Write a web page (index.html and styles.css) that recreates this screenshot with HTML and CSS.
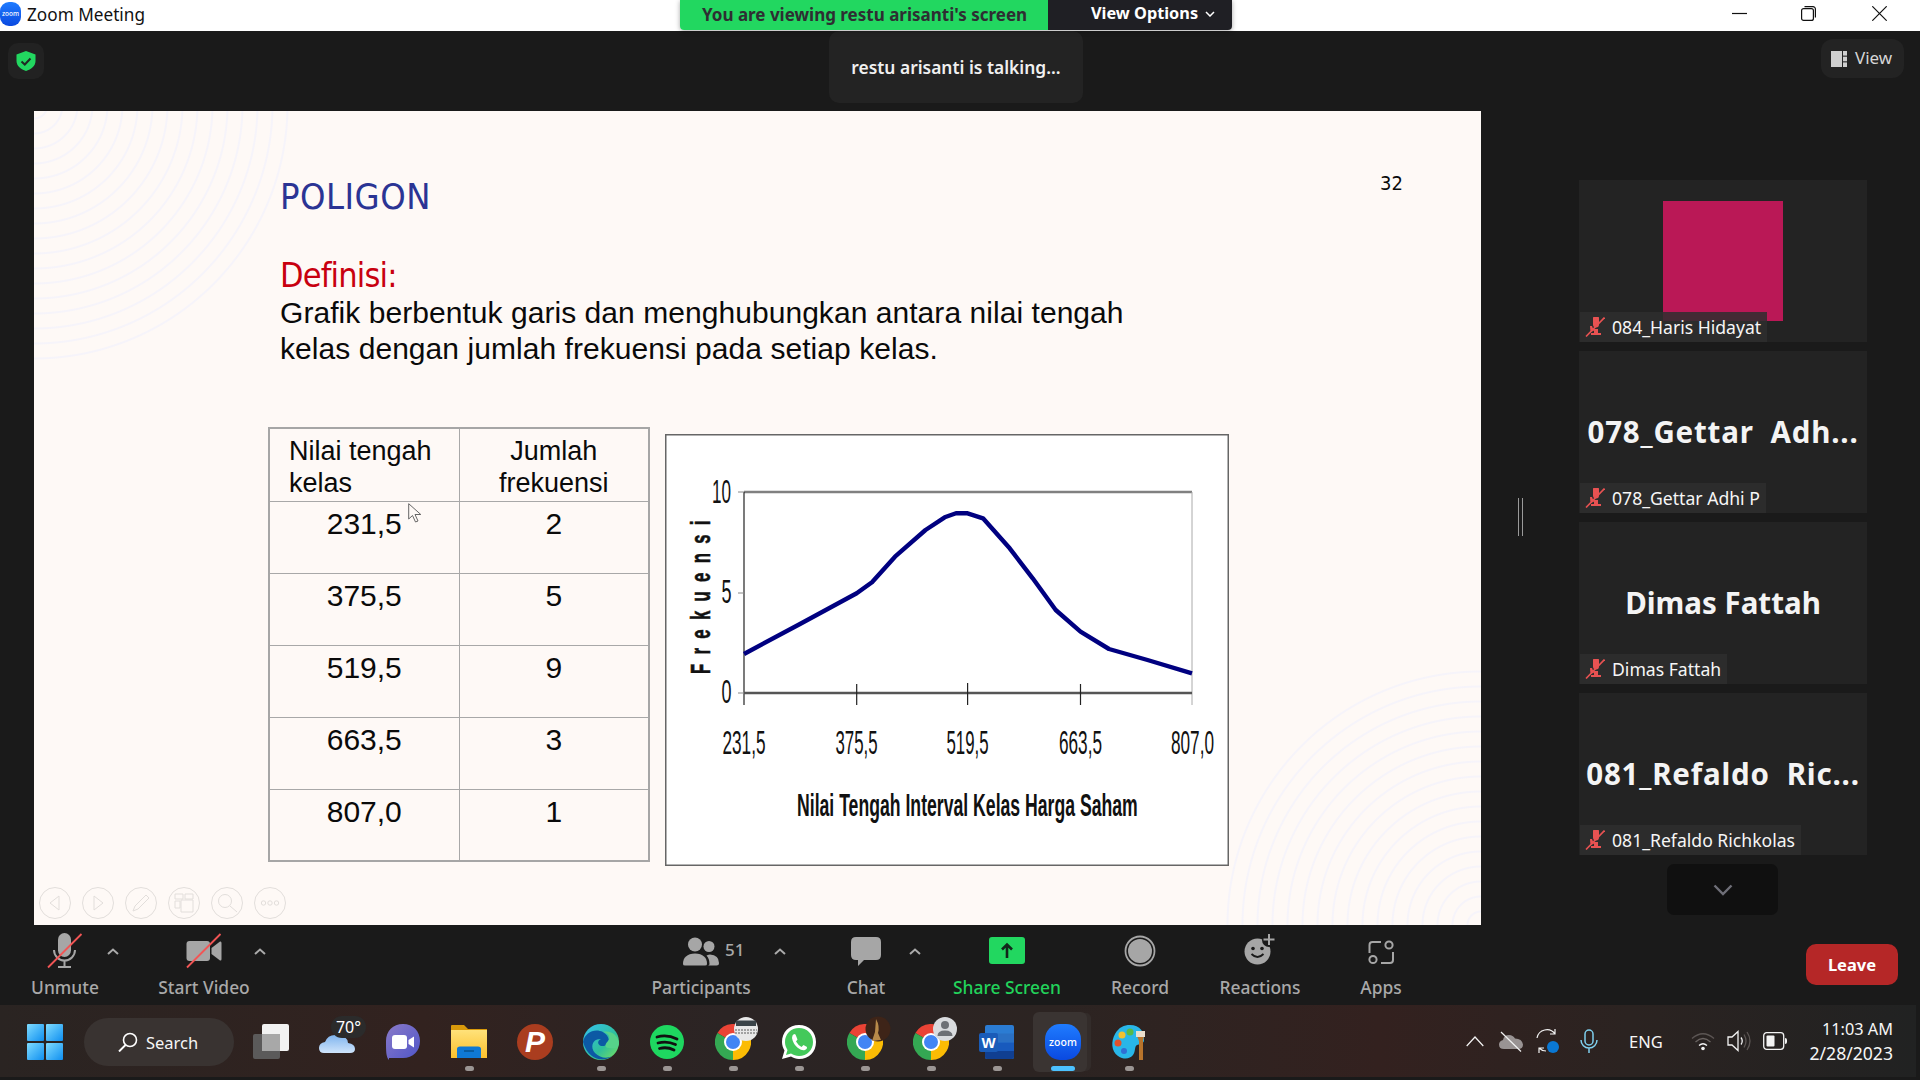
FILE: index.html
```html
<!DOCTYPE html>
<html lang="en">
<head>
<meta charset="utf-8">
<title>Zoom Meeting</title>
<link rel="stylesheet" href="styles.css">
</head>
<body>
<svg class="defs" aria-hidden="true">
  <defs>
    <linearGradient id="gWin" x1="0" y1="0" x2="1" y2="1"><stop offset="0" stop-color="#7fdcff"/><stop offset="1" stop-color="#0f8ff0"/></linearGradient>
    <linearGradient id="gBlue" x1="0" y1="0" x2="0" y2="1"><stop offset="0" stop-color="#1f7cff"/><stop offset="1" stop-color="#0a49e0"/></linearGradient>
    <linearGradient id="gEdge" x1="0" y1="0" x2="1" y2="1"><stop offset="0" stop-color="#35c1f1"/><stop offset=".6" stop-color="#2fbf9a"/><stop offset="1" stop-color="#7fe35a"/></linearGradient>
    <linearGradient id="gFolder" x1="0" y1="0" x2="0" y2="1"><stop offset="0" stop-color="#ffe27a"/><stop offset="1" stop-color="#fcc02c"/></linearGradient>
    <linearGradient id="gTeams" x1="0" y1="0" x2="1" y2="1"><stop offset="0" stop-color="#8a7ac8"/><stop offset="1" stop-color="#4f55c9"/></linearGradient>
    <linearGradient id="gCloud" x1="0" y1="0" x2="0" y2="1"><stop offset="0" stop-color="#7fb4ee"/><stop offset="1" stop-color="#cfe4fb"/></linearGradient>
    <symbol id="muteName" viewBox="0 0 20 20">
      <path d="M8 1.500a3 3 0 0 1 6 0v6a3 3 0 0 1-6 0zM6 16h10v2H6zM9 12h4v5H9zM5 9l2 0q.5 3 3 4l-4 2q-1-2-1-6z" fill="#e85252"/>
      <path d="M1 19.500 19.500 .5" stroke="#e85252" stroke-width="1.600" fill="none"/>
    </symbol>
    <symbol id="chrome" viewBox="0 0 36 36">
      <path d="M18 18 2.400 9A18 18 0 0 1 33.600 9Z" fill="#ea4335"/>
      <path d="M18 18 33.600 9A18 18 0 0 1 18 36Z" fill="#fbbc04"/>
      <path d="M18 18 18 36A18 18 0 0 1 2.400 9Z" fill="#34a853"/>
      <circle cx="18" cy="18" r="9" fill="#fff"/>
      <circle cx="18" cy="18" r="7" fill="#4285f4"/>
    </symbol>
  </defs>
</svg>

<header class="titlebar">
  <svg class="app-logo" viewBox="0 0 21 24"><rect width="21" height="24" rx="9" fill="url(#gBlue)"/><text class="logo-text" x="10.500" y="14" font-size="6.400">zoom</text></svg>
  <span class="app-title">Zoom Meeting</span>
  <div class="banner">
    <span class="banner-msg">You are viewing restu arisanti's screen</span>
    <span class="banner-opts">View Options
      <svg class="banner-chev" viewBox="0 0 10 6"><path d="M1 1 5 5 9 1" fill="none" stroke="#fff" stroke-width="1.500"/></svg>
    </span>
  </div>
  <div class="win-controls">
    <svg class="win-icon" viewBox="0 0 15 15"><path d="M0 7.500H15" stroke="#111" stroke-width="1.200"/></svg>
    <svg class="win-icon win-restore" viewBox="0 0 15 15"><rect x=".6" y="2.600" width="11.800" height="11.800" rx="2" fill="none" stroke="#111" stroke-width="1.200"/><path d="M3.500 .6H12a2.400 2.400 0 0 1 2.400 2.400V11.500" fill="none" stroke="#111" stroke-width="1.200"/></svg>
    <svg class="win-icon win-close" viewBox="0 0 15 15"><path d="M.3 .3 14.700 14.700M14.700 .3 .3 14.700" stroke="#111" stroke-width="1.200"/></svg>
  </div>
</header>

<main class="stage">
  <div class="shield-box">
    <svg class="shield" viewBox="0 0 20 20"><path d="M10 0 19.500 3.500V10C19.500 15 15 18.500 10 20 5 18.500 .5 15 .5 10V3.500Z" fill="#22d760"/><path d="M5.500 10.500 8.800 13.500 14.500 7.500" fill="none" stroke="#1f2a24" stroke-width="2"/></svg>
  </div>
  <div class="talking">restu arisanti is talking...</div>
  <div class="view-btn">
    <svg class="view-icon" viewBox="0 0 16 16"><rect width="11" height="16" fill="#cfcfcf"/><rect x="12" width="4" height="4.600" fill="#cfcfcf"/><rect x="12" y="5.700" width="4" height="4.600" fill="#cfcfcf"/><rect x="12" y="11.400" width="4" height="4.600" fill="#cfcfcf"/></svg>
    View
  </div>

  <section class="slide">
    <div class="rings rings-tl"></div>
    <div class="rings rings-br"></div>
    <div class="slide-content">
      <div class="slide-head">
        <h1 class="slide-title">POLIGON</h1>
        <span class="slide-num">32</span>
      </div>
      <h2 class="slide-def">Definisi:</h2>
      <p class="slide-body">Grafik berbentuk garis dan menghubungkan antara nilai tengah<br>kelas dengan jumlah frekuensi pada setiap kelas.</p>
      <div class="slide-row">
        <table class="freq">
          <tr class="freq-head"><th class="th-left">Nilai tengah<br>kelas</th><th>Jumlah<br>frekuensi</th></tr>
          <tr><td>231,5</td><td>2</td></tr>
          <tr><td>375,5</td><td>5</td></tr>
          <tr><td>519,5</td><td>9</td></tr>
          <tr><td>663,5</td><td>3</td></tr>
          <tr><td>807,0</td><td>1</td></tr>
        </table>
        <svg class="chart" viewBox="0 0 564 432">
          <rect x=".75" y=".75" width="562.500" height="430.500" fill="#fff" stroke="#666" stroke-width="1.500"/>
          <path d="M79 58H527" stroke="#808080" stroke-width="2.500"/>
          <path d="M527 58V271" stroke="#aaa" stroke-width="1"/>
          <path d="M79 58V271" stroke="#222" stroke-width="1.200"/>
          <path d="M79 259H527" stroke="#555" stroke-width="2.500"/>
          <path d="M73 58H79M73 159H79M73 259H79" stroke="#888" stroke-width="1"/>
          <path d="M191.700 250V271M302.600 249V271M415.500 250V271" stroke="#222" stroke-width="1.200"/>
          <polyline points="79,220 135,190 191.700,159.300 207,148.300 230,122.700 260.500,96 279.700,83.300 291,79.300 302.600,79.300 318,84.300 344.700,114.300 367.700,144.300 390.700,176 415.500,197.700 444,215 482.500,226 527,239.300" fill="none" stroke="#000080" stroke-width="4.400" stroke-linejoin="round"/>
          <text class="ch-num" transform="translate(47,69) scale(.518,1)">10</text>
          <text class="ch-num" transform="translate(56.500,169) scale(.545,1)">5</text>
          <text class="ch-num" transform="translate(56.500,269) scale(.545,1)">0</text>
          <text class="ch-num" transform="translate(57.500,320) scale(.521,1)">231,5</text>
          <text class="ch-num" transform="translate(170.500,320) scale(.51,1)">375,5</text>
          <text class="ch-num" transform="translate(281.500,320) scale(.51,1)">519,5</text>
          <text class="ch-num" transform="translate(394,320) scale(.521,1)">663,5</text>
          <text class="ch-num" transform="translate(506,320) scale(.521,1)">807,0</text>
          <text class="ch-title" transform="translate(132,382) scale(.569,1)">Nilai Tengah Interval Kelas Harga Saham</text>
          <text class="ch-ylabel" transform="translate(45,240) rotate(-90) scale(.62,1)" letter-spacing="15">Frekuensi</text>
        </svg>
      </div>
    </div>
    <svg class="cursor" viewBox="0 0 14 20"><path d="M.7 .7V16L4.500 12.500 7.500 19 10 18 7 11.500H12.800Z" fill="#fef9f6" stroke="#666" stroke-width="1"/></svg>
    <div class="slide-tools">
      <svg class="tool" viewBox="0 0 32 32"><circle cx="16" cy="16" r="15.500"/><path d="M20 9 11 16 20 23Z"/></svg>
      <svg class="tool" viewBox="0 0 32 32"><circle cx="16" cy="16" r="15.500"/><path d="M12 9 21 16 12 23Z"/></svg>
      <svg class="tool" viewBox="0 0 32 32"><circle cx="16" cy="16" r="15.500"/><path d="M8 24 10 19 21 8 24 11 13 22Z"/></svg>
      <svg class="tool" viewBox="0 0 32 32"><circle cx="16" cy="16" r="15.500"/><path d="M7 7H15V12H7ZM17 7H25V12H17ZM7 14H12V21H7ZM13 13H25V25H13Z"/></svg>
      <svg class="tool" viewBox="0 0 32 32"><circle cx="16" cy="16" r="15.500"/><circle cx="14" cy="14" r="6.500"/><path d="M19 19 26 25"/></svg>
      <svg class="tool" viewBox="0 0 32 32"><circle cx="16" cy="16" r="15.500"/><circle cx="9.500" cy="16" r="2.200"/><circle cx="16" cy="16" r="2.200"/><circle cx="22.500" cy="16" r="2.200"/></svg>
    </div>
  </section>

  <div class="splitter"></div>

  <aside class="panel">
    <div class="tile">
      <div class="avatar"></div>
      <div class="name-tag"><svg class="name-mic"><use href="#muteName"/></svg>084_Haris Hidayat</div>
    </div>
    <div class="tile">
      <span class="big-name big-wide">078_Gettar&nbsp; Adh...</span>
      <div class="name-tag"><svg class="name-mic"><use href="#muteName"/></svg>078_Gettar Adhi P</div>
    </div>
    <div class="tile">
      <span class="big-name">Dimas Fattah</span>
      <div class="name-tag"><svg class="name-mic"><use href="#muteName"/></svg>Dimas Fattah</div>
    </div>
    <div class="tile">
      <span class="big-name big-wide">081_Refaldo&nbsp; Ric...</span>
      <div class="name-tag"><svg class="name-mic"><use href="#muteName"/></svg>081_Refaldo Richkolas</div>
    </div>
    <div class="next-btn"><svg class="next-chev" viewBox="0 0 20 12"><path d="M1.500 1.500 10 10 18.500 1.500" fill="none" stroke="#6f6f78" stroke-width="2.400"/></svg></div>
  </aside>
</main>

<footer class="toolbar">
  <div class="tb-btn w-unmute">
    <svg class="tb-icon" viewBox="0 0 36 36">
      <rect x="11" y="0" width="13" height="24" rx="6.500" fill="#a6a6a6"/>
      <path d="M7 17a10.500 10.500 0 0 0 21 0M17.500 28V33M11 34H24" fill="none" stroke="#a6a6a6" stroke-width="2"/>
      <path d="M1 34.500 34.500 1" stroke="#f25555" stroke-width="1.800"/>
    </svg>
    <span class="tb-label">Unmute</span>
  </div>
  <svg class="tb-chev" viewBox="0 0 12 7"><path d="M1 6 6 1.500 11 6" fill="none" stroke="#aaa" stroke-width="2"/></svg>
  <div class="tb-btn w-video">
    <svg class="tb-icon" viewBox="0 0 36 36">
      <rect x=".5" y="8" width="23.500" height="20" rx="3" fill="#a6a6a6"/>
      <path d="M25.500 15 34 8.500Q35.500 8 35.500 10V26Q35.500 28 34 27.500L25.500 21Z" fill="#a6a6a6"/>
      <path d="M1 34.500 34.500 1" stroke="#f25555" stroke-width="1.800"/>
    </svg>
    <span class="tb-label">Start Video</span>
  </div>
  <svg class="tb-chev c-video" viewBox="0 0 12 7"><path d="M1 6 6 1.500 11 6" fill="none" stroke="#aaa" stroke-width="2"/></svg>

  <div class="tb-btn w-part">
    <svg class="tb-icon" viewBox="0 0 36 36">
      <circle cx="12" cy="11.500" r="7" fill="#a6a6a6"/>
      <path d="M0 31Q0 21 12 20.500 24 21 24 31Q24 32.500 22 32.500H2Q0 32.500 0 31Z" fill="#a6a6a6"/>
      <circle cx="26" cy="13.500" r="5.500" fill="#a6a6a6"/>
      <path d="M25 32.500H33.500Q36 32.500 36 30 36 22 27 21.500 26 21.500 23.500 22.500 26.500 25.500 26.500 31Q26.500 32 25 32.500Z" fill="#a6a6a6"/>
    </svg>
    <span class="tb-count">51</span>
    <span class="tb-label">Participants</span>
  </div>
  <svg class="tb-chev c-part" viewBox="0 0 12 7"><path d="M1 6 6 1.500 11 6" fill="none" stroke="#aaa" stroke-width="2"/></svg>
  <div class="tb-btn w-chat">
    <svg class="tb-icon" viewBox="0 0 36 36">
      <path d="M8 4H28Q33 4 33 9V22Q33 27 28 27H16L10 33V27H8Q3 27 3 22V9Q3 4 8 4Z" fill="#a6a6a6"/>
    </svg>
    <span class="tb-label">Chat</span>
  </div>
  <svg class="tb-chev c-chat" viewBox="0 0 12 7"><path d="M1 6 6 1.500 11 6" fill="none" stroke="#aaa" stroke-width="2"/></svg>
  <div class="tb-btn w-share">
    <svg class="tb-icon" viewBox="0 0 36 36">
      <rect x="0" y="4" width="36" height="27" rx="3" fill="#22d760"/>
      <path d="M18 25V12M13 16.500 18 11.500 23 16.500" fill="none" stroke="#12261a" stroke-width="2.600"/>
    </svg>
    <span class="tb-label tb-green">Share Screen</span>
  </div>
  <div class="tb-btn w-record">
    <svg class="tb-icon" viewBox="0 0 36 36">
      <circle cx="18" cy="18" r="14.500" fill="none" stroke="#a6a6a6" stroke-width="1.800"/>
      <circle cx="18" cy="18" r="12" fill="#a6a6a6"/>
    </svg>
    <span class="tb-label">Record</span>
  </div>
  <div class="tb-btn w-react">
    <svg class="tb-icon" viewBox="0 0 36 36">
      <circle cx="15.500" cy="18.500" r="13" fill="#a6a6a6"/>
      <circle cx="11" cy="15.500" r="1.800" fill="#1a1a1a"/><circle cx="20" cy="15.500" r="1.800" fill="#1a1a1a"/>
      <path d="M9.500 21Q15.500 27 21.500 21" fill="none" stroke="#1a1a1a" stroke-width="1.800"/>
      <circle cx="27" cy="7" r="7" fill="#1a1a1a"/>
      <path d="M27 1V12M21.500 6.500H32.500" stroke="#a6a6a6" stroke-width="2"/>
    </svg>
    <span class="tb-label">Reactions</span>
  </div>
  <div class="tb-btn w-apps">
    <svg class="tb-icon" viewBox="0 0 36 36">
      <path d="M18 9H9.500Q6.500 9 6.500 12V20M30 19V27Q30 30 27 30H18" fill="none" stroke="#a6a6a6" stroke-width="2"/>
      <circle cx="26" cy="12" r="3.600" fill="none" stroke="#a6a6a6" stroke-width="2"/>
      <circle cx="10" cy="26.500" r="3.600" fill="none" stroke="#a6a6a6" stroke-width="2"/>
    </svg>
    <span class="tb-label">Apps</span>
  </div>
  <div class="leave">Leave</div>
</footer>

<nav class="taskbar">
  <div class="slot slot-win">
    <svg class="tk-icon" viewBox="0 0 36 36"><rect x="0" y="0" width="17" height="17" rx="1" fill="url(#gWin)"/><rect x="19" y="0" width="17" height="17" rx="1" fill="url(#gWin)"/><rect x="0" y="19" width="17" height="17" rx="1" fill="url(#gWin)"/><rect x="19" y="19" width="17" height="17" rx="1" fill="url(#gWin)"/></svg>
  </div>
  <div class="search">
    <svg class="search-icon" viewBox="0 0 20 20"><circle cx="12" cy="8" r="6.500" fill="none" stroke="#fff" stroke-width="1.600"/><path d="M7.500 13 1 19.500" stroke="#fff" stroke-width="1.900"/></svg>
    Search
  </div>
  <div class="slot slot-first">
    <svg class="tk-icon" viewBox="0 0 36 36"><rect x="9" y="0" width="27" height="27" rx="2" fill="#f2f2f2"/><rect x="0" y="10" width="27" height="25" rx="2" fill="#5f5f5f" fill-opacity=".92"/><rect x="9" y="10" width="18" height="17" fill="#a8a8a8"/></svg>
  </div>
  <div class="slot">
    <svg class="tk-icon" viewBox="0 0 36 36"><path d="M5 29Q0 29 0 24 0 19 6 18 9 10 18 11 28 11 29 19 36 20 36 25 36 29 31 29Z" fill="url(#gCloud)"/><rect x="12" y="-8" width="35" height="22" rx="11" fill="#2b2b2b"/><text class="tk-temp" x="29.500" y="9">70°</text></svg>
  </div>
  <div class="slot">
    <svg class="tk-icon" viewBox="0 0 36 36"><path d="M18 0C28 0 35 7 35 17 35 27 28 34 18 34H4L4 36C1 33 1 27 1 17 1 7 8 0 18 0Z" fill="url(#gTeams)"/><rect x="7" y="11" width="15" height="14" rx="3" fill="#fff"/><path d="M23.500 16 29 12.500V23.500L23.500 20Z" fill="#fff"/></svg>
  </div>
  <div class="slot">
    <svg class="tk-icon" viewBox="0 0 36 36"><path d="M0 2Q0 1 1 1H13L17 5H36V12H0Z" fill="#d99a0b"/><path d="M0 6H36V34H0Z" fill="url(#gFolder)"/><path d="M6 25Q6 22.500 9 22.500H27Q30 22.500 30 25V34H6Z" fill="#0f78d4"/><path d="M13 27H23" stroke="#07528f" stroke-width="1.500"/></svg>
    <i class="dot"></i>
  </div>
  <div class="slot">
    <svg class="tk-icon" viewBox="0 0 36 36"><ellipse cx="18" cy="18" rx="18" ry="18" fill="#aa3d1f"/><text class="tk-psi" x="18" y="28">P</text></svg>
  </div>
  <div class="slot">
    <svg class="tk-icon" viewBox="0 0 36 36"><circle cx="18" cy="18" r="18" fill="url(#gEdge)"/><path d="M0 18C2 8 12 4 20 8 27 12 28 20 21 22 15 23 13 17 18 15 9 14 7 24 12 29 17 34 24 35 29 32 22 38 6 38 0 18Z" fill="#0c59a4"/><path d="M36 20C34 26 30 24 26 24 22 24 21 21 25 17 28 14 26 9 20 8 28 6 36 12 36 20Z" fill="#56d28a"/></svg>
    <i class="dot"></i>
  </div>
  <div class="slot">
    <svg class="tk-icon" viewBox="0 0 36 36"><circle cx="18" cy="18" r="17" fill="#1ed760"/><path d="M8 13Q18 10 28 15M9 19Q18 16.500 26.500 20.500M10.500 24.500Q18 22.500 25 26" fill="none" stroke="#111" stroke-width="2.800" stroke-linecap="round"/></svg>
    <i class="dot"></i>
  </div>
  <div class="slot">
    <svg class="tk-icon" viewBox="0 0 36 36"><use href="#chrome"/><circle cx="31" cy="5" r="12" fill="#e8e8e8"/><path d="M21 -3.500H41V2H21Z" fill="#3a4348"/><path d="M20 6H42M20 9H42" stroke="#8a8a8a" stroke-width="1.500" stroke-dasharray="2 1"/></svg>
    <i class="dot"></i>
  </div>
  <div class="slot">
    <svg class="tk-icon" viewBox="0 0 36 36"><path d="M18 1C8 1 1 8 1 18 1 21 2 24 3.500 26.500L1 35 10 32.500C12.500 34 15 35 18 35 28 35 35 28 35 18 35 8 28 1 18 1Z" fill="#fff"/><path d="M18 4C10 4 4 10 4 18 4 21 5 23.500 6.500 26L5 31 10 29.500C12.500 31 15 32 18 32 26 32 32 26 32 18 32 10 26 4 18 4Z" fill="#43c95a"/><path d="M13 10Q11 11 11 14 12 20 17 24 21 27 24 26 26.500 25 26 23L22.500 21 20.500 23Q17 21 15 17.500L16.500 15.500 14.500 10.500Z" fill="#fff"/></svg>
    <i class="dot"></i>
  </div>
  <div class="slot">
    <svg class="tk-icon" viewBox="0 0 36 36"><use href="#chrome"/><circle cx="31" cy="5" r="12.500" fill="#3e2418"/><path d="M29 -5Q33 2 31 9L34 16 25 17 28 8Z" fill="#b98a4a"/></svg>
    <i class="dot"></i>
  </div>
  <div class="slot">
    <svg class="tk-icon" viewBox="0 0 36 36"><use href="#chrome"/><circle cx="32" cy="5" r="12" fill="#d9dbde"/><circle cx="32" cy="1" r="4" fill="#6d7075"/><path d="M24.500 12Q24.500 6.500 32 6.500 39.500 6.500 39.500 12Z" fill="#6d7075"/></svg>
    <i class="dot"></i>
  </div>
  <div class="slot">
    <svg class="tk-icon" viewBox="0 0 36 36"><rect x="6" y="1" width="29" height="34" rx="2" fill="#2b7cd3"/><rect x="6" y="9.500" width="29" height="9" fill="#2a70c4"/><rect x="6" y="18.500" width="29" height="8.500" fill="#185abd"/><path d="M6 27H35V33Q35 35 33 35H8Q6 35 6 33Z" fill="#103f91"/><rect x="0" y="9" width="19" height="19" rx="2" fill="#1a5cb8"/><text class="tk-word" x="9.500" y="24">W</text></svg>
    <i class="dot"></i>
  </div>
  <div class="slot slot-active">
    <svg class="tk-icon" viewBox="0 0 36 36"><rect width="36" height="36" rx="15" fill="url(#gBlue)"/><text class="logo-text" x="18" y="21.500" font-size="10.500">zoom</text></svg>
    <i class="dot dot-active"></i>
  </div>
  <div class="slot">
    <svg class="tk-icon" viewBox="0 0 36 36"><path d="M19 1C29 1 34 8 33 17 32 20 28 20 26 21 23 23 25 27 22 31 19 35 13 36 7 32 0 27 0 17 4 10 8 3 13 1 19 1Z" fill="#29b6e8"/><circle cx="11" cy="11" r="3.500" fill="#f2c12e"/><circle cx="19" cy="8" r="3.500" fill="#57b947"/><circle cx="7" cy="19" r="3.500" fill="#e2512a"/><circle cx="13" cy="27" r="3" fill="#2f6fd4"/><path d="M26 12H33L32 17V36H28V17Z" fill="#b8742c"/><path d="M25 7H34V13H25Z" fill="#eadfce"/></svg>
    <i class="dot"></i>
  </div>

  <div class="tray">
    <svg class="tr-caret" viewBox="0 0 18 11"><path d="M.7 10 9 1 17.300 10" fill="none" stroke="#f3f3f3" stroke-width="1.200"/></svg>
    <svg class="tr-cloud" viewBox="0 0 24 22"><path d="M5 19Q0 19 0 14.500 0 11 4 10 5 5 10 5 14 5 16 8.500 23 8.500 24 14.500 24 19 19 19Z" fill="#999393"/><path d="M2 2 22 21.500" stroke="#f3f3f3" stroke-width="1.200"/></svg>
    <svg class="tr-sync" viewBox="0 0 25 25"><path d="M2 9A10 10 0 0 1 20 5M20 0V5H15M4 24V19H9M4 19A10 10 0 0 0 11 22" fill="none" stroke="#f3f3f3" stroke-width="1.200"/><circle cx="18" cy="18" r="6" fill="#0a78d4"/></svg>
    <svg class="tr-mic" viewBox="0 0 18 24"><rect x="5" y="1" width="8" height="15" rx="4" fill="none" stroke="#7fd0ee" stroke-width="1.500"/><path d="M1 11A8 8 0 0 0 17 11M9 19V24" fill="none" stroke="#7fd0ee" stroke-width="1.500"/></svg>
    <span class="tr-lang">ENG</span>
    <svg class="tr-wifi" viewBox="0 0 24 20"><path d="M1 7.500Q12-2 23 7.500" fill="none" stroke="#5c5654" stroke-width="1.300"/><path d="M4.500 11Q12 4 19.500 11" fill="none" stroke="#6a6462" stroke-width="1.300"/><path d="M8 14.500Q12 11 16 14.500" fill="none" stroke="#f3f3f3" stroke-width="1.300"/><circle cx="12" cy="17.500" r="1.800" fill="#f3f3f3"/></svg>
    <svg class="tr-speaker" viewBox="0 0 24 24"><path d="M1 8H5L11 2.500V21.500L5 16H1Z" fill="none" stroke="#f3f3f3" stroke-width="1.300"/><path d="M14 8.500Q16.500 12 14 15.500" fill="none" stroke="#f3f3f3" stroke-width="1.300"/><path d="M17 5.500Q21 12 17 18.500M20 3Q26 12 20 21" fill="none" stroke="#5c5654" stroke-width="1.300"/></svg>
    <svg class="tr-batt" viewBox="0 0 24 18"><rect x=".7" y=".7" width="20" height="16.600" rx="3" fill="none" stroke="#f3f3f3" stroke-width="1.300"/><rect x="3.500" y="3.500" width="8" height="11" rx="1" fill="#f3f3f3"/><path d="M22 6Q24 6 24 8V10Q24 12 22 12Z" fill="#f3f3f3"/></svg>
    <div class="tr-clock"><span class="tr-time">11:03 AM</span><span class="tr-date">2/28/2023</span></div>
  </div>
</nav>
</body>
</html>
```
FILE: styles.css
```css
* { box-sizing: border-box; }
html, body { margin: 0; padding: 0; }
body {
  width: 1920px;
  height: 1080px;
  overflow: hidden;
  background: #1a1a1a;
  font-family: "Noto Sans", "Open Sans", sans-serif;
  color: #fff;
}
.defs { position: absolute; width: 0; height: 0; }
svg { display: block; }

/* title bar */
.titlebar {
  height: 31px;
  background: #fff;
  display: flex;
  align-items: flex-start;
  color: #111;
  position: relative;
  z-index: 3;
}
.app-logo { width: 21px; height: 24px; margin-top: 2px; flex: none; }
.logo-text { fill: #fff; text-anchor: middle; font-family: "Noto Sans", sans-serif; font-weight: 500; }
.app-title { width: 653px; margin-left: 6px; font-size: 17.200px; line-height: 30px; flex: none; }
.banner {
  width: 552px;
  height: 30px;
  display: flex;
  flex: none;
  border-radius: 0 0 4px 4px;
  box-shadow: 0 1px 5px rgba(0, 0, 0, .35);
  font-weight: 700;
}
.banner-msg {
  width: 368px;
  background: #22d760;
  color: #2e2e32;
  font-size: 17px;
  line-height: 29px;
  padding-left: 22px;
  white-space: nowrap;
  border-radius: 0 0 0 4px;
}
.banner-opts {
  width: 184px;
  background: #1f1f24;
  color: #fff;
  font-size: 16.300px;
  line-height: 26px;
  padding-left: 43px;
  display: flex;
  white-space: pre;
  border-radius: 0 0 4px 0;
}
.banner-chev { width: 10px; height: 6px; margin: 11px 0 0 7px; }
.win-controls { margin-left: auto; padding-right: 33px; display: flex; }
.win-icon { width: 15px; height: 15px; margin: 6px 0 0 54px; }
.win-close { margin-left: 56px; }

/* stage */
.stage {
  height: 894px;
  position: relative;
  display: flex;
  align-items: flex-start;
  padding-left: 34px;
}
.shield-box {
  position: absolute;
  left: 8px;
  top: 12px;
  width: 36px;
  height: 36px;
  border-radius: 10px;
  background: #222;
  display: flex;
  align-items: center;
  justify-content: center;
}
.shield { width: 20px; height: 20px; }
.talking {
  position: absolute;
  left: 829px;
  top: 0;
  width: 254px;
  height: 72px;
  background: #232323;
  border-radius: 10px;
  display: flex;
  align-items: center;
  justify-content: center;
  font-size: 17.400px;
  font-weight: 600;
  color: #f0f0f0;
}
.view-btn {
  position: absolute;
  left: 1821px;
  top: 8px;
  width: 83px;
  height: 39px;
  background: #232323;
  border-radius: 12px;
  display: flex;
  align-items: center;
  padding: 0 0 2px 10px;
  gap: 8px;
  font-size: 17px;
  color: #d6d6d6;
}
.view-icon { width: 16px; height: 16px; margin-top: 2px; }

/* slide */
.slide {
  margin-top: 80px;
  width: 1447px;
  height: 814px;
  flex: none;
  background: #fef9f6;
  position: relative;
  color: #0a0a0a;
  font-family: "Liberation Sans", Arial, sans-serif;
}
.rings { position: absolute; width: 265px; height: 258px; }
.rings-tl {
  left: 0;
  top: 0;
  border-bottom-right-radius: 100%;
  background: repeating-radial-gradient(circle at 0 -6px, transparent 0, transparent 12px, #f6f4fa 13px, #f6f4fa 14px, transparent 15px);
}
.rings-br {
  right: 0;
  bottom: 0;
  border-top-left-radius: 100%;
  background: repeating-radial-gradient(circle at 100% 100%, transparent 0, transparent 12px, #f6f4fa 13px, #f6f4fa 14px, transparent 15px);
}
.slide-content { position: relative; padding: 64px 0 0 246px; }
.slide-head { display: flex; justify-content: space-between; width: 1123px; }
.slide-title {
  margin: 0;
  font-family: "DejaVu Sans Condensed", "DejaVu Sans", sans-serif;
  font-weight: 400;
  font-size: 36px;
  line-height: 44px;
  color: #2b3494;
  letter-spacing: .5px;
}
.slide-num {
  font-family: "DejaVu Sans Condensed", "DejaVu Sans", sans-serif;
  font-size: 20px;
  line-height: 24px;
  margin-top: -4px;
}
.slide-def {
  margin: 36px 0 0;
  font-family: "DejaVu Sans Condensed", "DejaVu Sans", sans-serif;
  font-weight: 400;
  font-size: 34px;
  line-height: 40px;
  color: #c8000f;
  letter-spacing: -.85px;
}
.slide-body { margin: 0; font-size: 30px; line-height: 36px; letter-spacing: .05px; }
.slide-row { display: flex; align-items: flex-start; margin: 60px 0 0 -12px; gap: 15px; }
.freq {
  width: 382px;
  height: 434px;
  border-collapse: collapse;
  table-layout: fixed;
  border: 2px solid #a6a6a6;
  font-size: 30px;
}
.freq td, .freq th {
  border: 1px solid #a8a8a8;
  padding: 5px 0 0;
  vertical-align: top;
  text-align: center;
  font-weight: 400;
  height: 72px;
}
.freq th { font-size: 27px; line-height: 32px; padding-top: 6px; height: 73px; }
.freq .th-left { text-align: left; padding-left: 19px; }
.chart { width: 564px; height: 432px; margin-top: 7px; flex: none; }
.ch-num { font-family: "Liberation Sans", sans-serif; font-size: 33px; fill: #111; }
.ch-title { font-family: "Liberation Sans", sans-serif; font-weight: 700; font-size: 31px; fill: #111; }
.ch-ylabel { font-family: "Liberation Sans", sans-serif; font-weight: 700; font-size: 27px; fill: #111; stroke: #111; stroke-width: .6px; }
.cursor { position: absolute; left: 374px; top: 392px; width: 14px; height: 20px; }
.slide-tools { position: absolute; left: 5px; bottom: 6px; display: flex; gap: 11px; }
.tool { width: 32px; height: 32px; fill: none; stroke: #e2dedb; stroke-width: 1; }

/* panel */
.splitter {
  width: 5px;
  height: 38px;
  margin: 467px 0 0 37px;
  border-left: 1.500px solid #9a9a9a;
  border-right: 1.500px solid #9a9a9a;
  flex: none;
}
.panel {
  width: 288px;
  margin: 149px 0 0 56px;
  display: flex;
  flex-direction: column;
  gap: 9px;
  flex: none;
}
.tile {
  height: 162px;
  background: #232323;
  position: relative;
  display: flex;
  align-items: center;
  justify-content: center;
}
.avatar { width: 120px; height: 120px; background: #ba1856; }
.big-name { font-size: 29.500px; font-weight: 700; color: #f4f4f4; white-space: nowrap; line-height: 1; }
.big-wide { letter-spacing: .8px; }
.name-tag {
  position: absolute;
  left: 1px;
  bottom: 0;
  height: 30px;
  background: rgba(46, 46, 46, .85);
  display: flex;
  align-items: center;
  font-size: 17.600px;
  color: #f6f6f6;
  padding: 0 6px 0 5px;
  white-space: nowrap;
}
.name-mic { width: 20px; height: 20px; margin-right: 7px; }
.next-btn {
  width: 111px;
  height: 51px;
  background: #101010;
  border-radius: 7px;
  margin-left: 88px;
  display: flex;
  align-items: center;
  justify-content: center;
}
.next-chev { width: 20px; height: 12px; }

/* toolbar */
.toolbar {
  height: 80px;
  display: flex;
  align-items: flex-start;
  padding: 8px 22px 0;
  position: relative;
}
.tb-btn { display: flex; flex-direction: column; align-items: center; flex: none; position: relative; }
.tb-icon { width: 36px; height: 36px; }
.tb-label { font-size: 17.400px; font-weight: 500; line-height: 22px; margin-top: 7px; color: #a9a9a9; white-space: nowrap; }
.tb-green { color: #22d35b; }
.tb-chev { width: 12px; height: 7px; margin: 15px 0 0 -1px; flex: none; }
.tb-count { position: absolute; left: 79px; top: 6px; font-size: 17px; font-weight: 500; line-height: 22px; color: #a9a9a9; }
.w-unmute { width: 86px; }
.w-video { width: 100px; margin-left: 35px; }
.c-video { margin-left: 0; }
.w-part { width: 110px; margin-left: 380px; }
.c-part { margin-left: 18px; }
.w-chat { width: 60px; margin-left: 50px; }
.c-chat { margin-left: 13px; }
.w-share { width: 116px; margin-left: 28px; }
.w-record { width: 80px; margin-left: 35px; }
.w-react { width: 100px; margin-left: 30px; }
.w-apps { width: 60px; margin-left: 41px; }
.leave {
  margin: 11px 0 0 auto;
  width: 92px;
  height: 41px;
  background: #b52727;
  border-radius: 10px;
  display: flex;
  align-items: center;
  justify-content: center;
  font-size: 16.500px;
  font-weight: 700;
}

/* taskbar */
.taskbar {
  width: 1916px;
  height: 72px;
  display: flex;
  align-items: flex-start;
  padding-left: 12px;
  background: linear-gradient(90deg, #2a2422 0%, #32221f 22%, #2b2424 38%, #2c2422 55%, #33211f 72%, #2b2321 85%, #212222 100%);
}
.slot {
  width: 66px;
  flex: none;
  padding-top: 19px;
  display: flex;
  flex-direction: column;
  align-items: center;
  position: relative;
}
.tk-icon { width: 36px; height: 36px; overflow: visible; position: relative; }
.slot-first { margin-left: 4px; }
.search {
  width: 150px;
  height: 48px;
  margin: 13px 0 0 6px;
  border-radius: 24px;
  background: #393331;
  display: flex;
  align-items: center;
  flex: none;
  padding-left: 34px;
  gap: 8px;
  font-size: 16.500px;
  color: #f6f6f6;
}
.search-icon { width: 20px; height: 20px; }
.dot { width: 9px; height: 5px; border-radius: 3px; background: #9b9694; margin-top: 6px; position: relative; }
.dot-active { width: 24px; background: #4cc2ff; }
.slot-active::before {
  content: "";
  position: absolute;
  left: 3px;
  top: 7px;
  width: 54px;
  height: 60px;
  border-radius: 6px;
  background: #3a3432;
  box-shadow: 5px 0 0 -1px #332c2a;
}
.tk-temp { fill: #fff; font-family: "Noto Sans", sans-serif; font-size: 16px; text-anchor: middle; }
.tk-psi { fill: #fff; font-family: "Liberation Sans", sans-serif; font-weight: 700; font-style: italic; font-size: 30px; text-anchor: middle; }
.tk-word { fill: #fff; font-family: "Liberation Sans", sans-serif; font-weight: 700; font-size: 15px; text-anchor: middle; }
.tray { margin-left: auto; padding-right: 23px; height: 72px; display: flex; align-items: center; }
.tr-caret { width: 18px; height: 11px; }
.tr-cloud { width: 24px; height: 22px; margin-left: 15px; }
.tr-sync { width: 25px; height: 25px; margin-left: 12px; }
.tr-mic { width: 18px; height: 24px; margin-left: 20px; }
.tr-lang { font-size: 16.500px; margin-left: 31px; color: #f6f6f6; width: 35px; }
.tr-wifi { width: 24px; height: 20px; margin-left: 27px; }
.tr-speaker { width: 24px; height: 24px; margin-left: 12px; }
.tr-batt { width: 24px; height: 18px; margin-left: 12px; }
.tr-clock {
  width: 86px;
  margin-left: 20px;
  display: flex;
  flex-direction: column;
  align-items: flex-end;
  line-height: 24px;
  color: #f6f6f6;
}
.tr-time { font-size: 16.300px; }
.tr-date { font-size: 17.600px; }
```
